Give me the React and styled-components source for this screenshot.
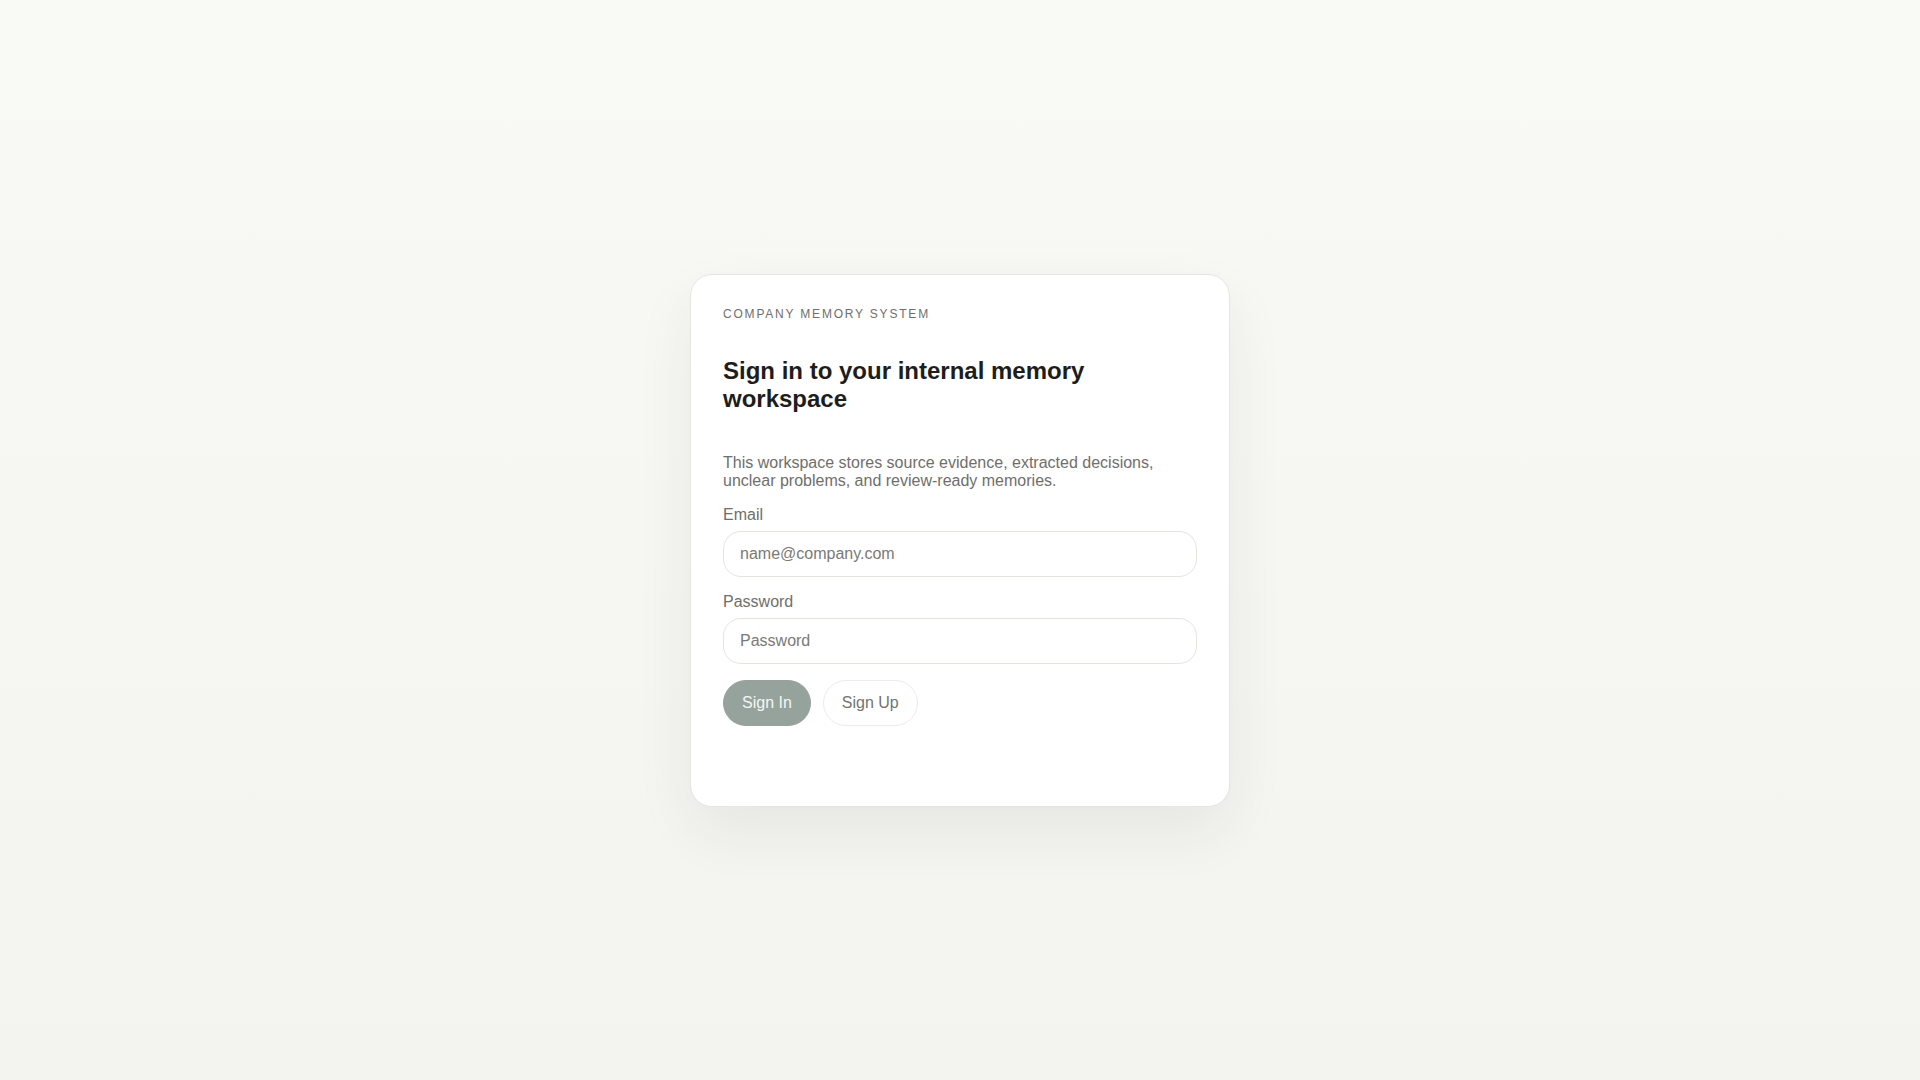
import React from "react";
import styled, { createGlobalStyle } from "styled-components";

const GlobalStyle = createGlobalStyle`
  * {
    box-sizing: border-box;
  }
  html, body {
    margin: 0;
    padding: 0;
  }
  body {
    font-family: "Liberation Sans", Arial, sans-serif;
    background: #f6f6f2;
  }
`;

const Page = styled.main`
  min-height: 100vh;
  display: flex;
  align-items: center;
  justify-content: center;
  background: linear-gradient(180deg, #f9faf6 0%, #f3f3ef 100%);
`;

const Card = styled.section`
  width: 540px;
  padding: 32px 32px 80px;
  background: #ffffff;
  border: 1px solid #e6e6e1;
  border-radius: 22px;
  box-shadow: 0 24px 60px rgba(40, 44, 36, 0.07);
`;

const Eyebrow = styled.div`
  margin: 0 0 36px;
  font-size: 12px;
  letter-spacing: 0.15em;
  text-transform: uppercase;
  color: #6f6f6a;
`;

const Title = styled.h1`
  margin: 0 0 41px;
  font-size: 24px;
  font-weight: 700;
  line-height: normal;
  color: #1d1d1b;
`;

const Lead = styled.p`
  margin: 0 0 16px;
  font-size: 16px;
  line-height: normal;
  color: #6f6f6a;
`;

const Form = styled.form`
  display: flex;
  flex-direction: column;
  gap: 16px;
`;

const Field = styled.label`
  display: flex;
  flex-direction: column;
  gap: 7px;
`;

const FieldLabel = styled.span`
  font-size: 16px;
  color: #6f6f6a;
`;

const Input = styled.input`
  height: 46px;
  padding: 0 16px;
  border: 1px solid #e4e4df;
  border-radius: 18px;
  background: #ffffff;
  font-family: inherit;
  font-size: 16px;
  color: #1d1d1b;
  outline: none;

  &::placeholder {
    color: #7a7a75;
  }
`;

const Actions = styled.div`
  display: flex;
  gap: 12px;
`;

const Button = styled.button`
  height: 46px;
  padding: 0 18px;
  border-radius: 999px;
  font-family: inherit;
  font-size: 16px;
  cursor: pointer;
  border: 1px solid ${(p) => (p.$primary ? "#95a39c" : "#ecece8")};
  background: ${(p) => (p.$primary ? "#95a39c" : "#ffffff")};
  color: ${(p) => (p.$primary ? "#f4f6f5" : "#74746f")};
`;

const App = () => {
  return (
    <>
      <GlobalStyle />
      <Page>
        <Card>
          <Eyebrow>Company Memory System</Eyebrow>
          <Title>Sign in to your internal memory workspace</Title>
          <Lead>
            This workspace stores source evidence, extracted decisions, unclear
            problems, and review-ready memories.
          </Lead>
          <Form onSubmit={(e) => e.preventDefault()}>
            <Field>
              <FieldLabel>Email</FieldLabel>
              <Input type="email" placeholder="name@company.com" />
            </Field>
            <Field>
              <FieldLabel>Password</FieldLabel>
              <Input type="password" placeholder="Password" />
            </Field>
            <Actions>
              <Button type="submit" $primary>
                Sign In
              </Button>
              <Button type="button">Sign Up</Button>
            </Actions>
          </Form>
        </Card>
      </Page>
    </>
  );
};

export default App;
